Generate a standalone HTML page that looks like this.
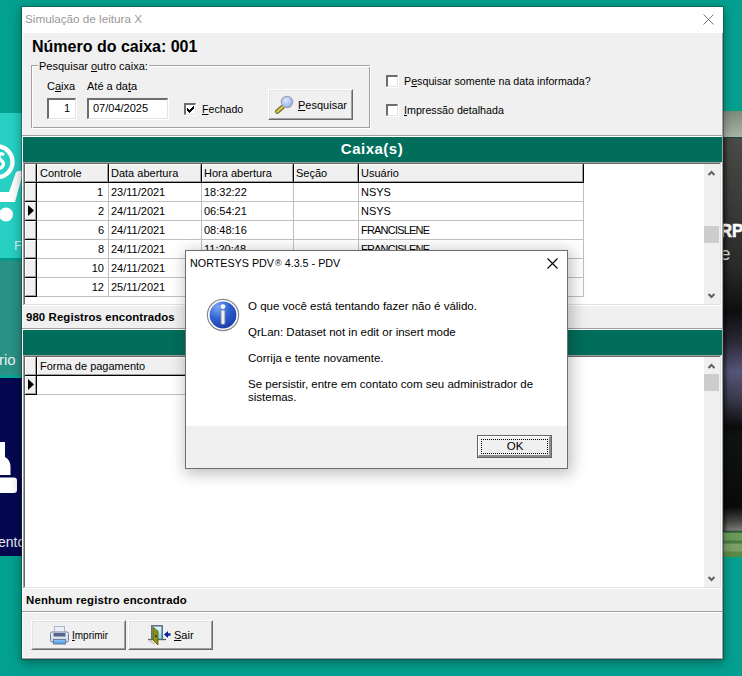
<!DOCTYPE html>
<html><head><meta charset="utf-8">
<style>
*{margin:0;padding:0;box-sizing:border-box}
html,body{width:742px;height:676px;overflow:hidden}
body{position:relative;background:#04a08f;font-family:"Liberation Sans",sans-serif;font-size:11px;color:#000}
.a{position:absolute}
.t{position:absolute;white-space:nowrap;line-height:1}
.u{text-decoration:underline;text-underline-offset:1px;text-decoration-thickness:1px}
svg{position:absolute;overflow:visible}
</style></head><body>

<div class="a" style="left:0px;top:113px;width:22px;height:145px;background:#27d0c3"></div>
<div class="a" style="left:0px;top:258px;width:22px;height:117px;background:#2a9186"></div>
<div class="a" style="left:0px;top:258px;width:22px;height:3px;background:#069a8b"></div>
<div class="a" style="left:0px;top:375px;width:22px;height:3px;background:#0aa594"></div>
<div class="a" style="left:0px;top:378px;width:22px;height:178px;background:#05084f"></div>
<svg style="left:0;top:113px" width="21" height="145">
<circle cx="-3" cy="48.8" r="15.5" fill="none" stroke="#fff" stroke-width="4.4"/>
<path d="M4 42Q0 39 -1 43Q-1 46 2 48Q5 51 2 54Q0 56 -2 54" stroke="#fff" stroke-width="3.2" fill="none"/>
<path d="M16 59L9 79H-2V89H15L23 60Q22 56 16 59Z" fill="#fff"/>
<circle cx="6" cy="101.5" r="7" fill="#fff"/>
</svg>
<div class="t" style="left:14px;top:239px;font-size:13px;color:#d8f4f0">F</div>
<div class="t" style="left:-1px;top:352px;font-size:15px;color:#e6f2ef">rio</div>
<svg style="left:0;top:440px" width="21" height="60">
<path d="M-2 2H5V17Q10.5 20 10.5 27V35H-2Z" fill="#fff"/>
<rect x="-4" y="37.5" width="21" height="15.5" rx="3" fill="#fff"/>
</svg>
<div class="t" style="left:-2px;top:535px;font-size:14px;color:#e8eaf4">ento</div>
<div class="a" style="left:723px;top:111px;width:19px;height:26px;background:linear-gradient(180deg,#7c8a7c,#a8b4a8)"></div>
<div class="a" style="left:723px;top:137px;width:19px;height:395px;background:linear-gradient(90deg,rgba(0,0,0,.45),rgba(0,0,0,0) 5px),linear-gradient(180deg,#1a4a3a 0px,#4a4a46 2px,#3c3c3a 60px,#2a2a2a 130px,#0e0e10 175px,#2a2a36 205px,#56567a 235px,#3a3a4c 262px,#0c0c0c 290px,#101410 300px,#0a0a0a 370px,#4a4a48 385px,#7a7a72 393px,#1a4a30 395px)"></div>
<div class="t" style="left:720px;top:222px;font-size:18.5px;font-weight:bold;color:#fff;-webkit-text-stroke:0.6px #fff;transform:scaleX(0.9);transform-origin:left top">RP</div>
<div class="t" style="left:720px;top:244px;font-size:19px;color:#ddd">e</div>
<div class="a" style="left:723px;top:532px;width:19px;height:25px;background:linear-gradient(180deg,#1a4a2a 0px,#6a9a5a 1px,#6a9a5a 8px,#4a7a40 9px,#4a7a40 11px,#7aa068 12px,#7aa068 19px,#5a8a48 20px,#5a8a48 25px)"></div>
<div class="a" style="left:21px;top:6px;width:703px;height:654px;border:1px solid rgba(20,50,50,.45);background:#f0f0f0;background-clip:padding-box;box-shadow:0 3px 10px rgba(0,0,0,.35)"></div>
<div class="a" style="left:22px;top:7px;width:701px;height:26px;background:#fff"></div>
<div class="a" style="left:22px;top:33px;width:1px;height:625px;background:#fff"></div>
<div class="a" style="left:721px;top:33px;width:1px;height:625px;background:#f7f7f7"></div>
<div class="a" style="left:22px;top:657px;width:700px;height:1px;background:#f7f7f7"></div>
<div class="a" style="left:722px;top:33px;width:1px;height:626px;background:#a49c9c"></div>
<div class="a" style="left:22px;top:658px;width:701px;height:1px;background:#a49c9c"></div>
<div class="t" style="left:25px;top:13.10px;font-size:11.7px;color:#999">Simulação de leitura X</div>
<svg style="left:703px;top:14px" width="11" height="11"><path d="M0.5 0.5L10.5 10.5M10.5 0.5L0.5 10.5" stroke="#777" stroke-width="1" fill="none"/></svg>
<div class="t" style="left:32px;top:39.46px;font-size:16px;font-weight:bold">Número do caixa: 001</div>
<div class="a" style="left:31px;top:65px;width:339px;height:63px;border:1px solid #a0a0a0;"></div>
<div class="a" style="left:32px;top:66px;width:339px;height:63px;border:1px solid #fff;border-right:0;border-bottom:0"></div>
<div class="a" style="left:370px;top:65px;width:1px;height:64px;background:#fff"></div>
<div class="a" style="left:31px;top:128px;width:340px;height:1px;background:#fff"></div>
<div class="t" style="left:38px;top:61px;font-size:11px;background:#f0f0f0;padding:0 1px">Pesquisar <span class="u">o</span>utro caixa:</div>
<div class="t" style="left:47px;top:80.69px;font-size:11px;">C<span class="u">a</span>ixa</div>
<div class="t" style="left:87px;top:80.69px;font-size:11px;">Até a da<span class="u">t</span>a</div>
<div class="a" style="left:47px;top:98px;width:29px;height:21px;background:#fff;border-top:2px solid #6d6d6d;border-left:2px solid #6d6d6d;border-right:1px solid #e3e3e3;border-bottom:1px solid #e3e3e3"></div>
<div class="a" style="left:76px;top:98px;width:1px;height:22px;background:#fff"></div>
<div class="a" style="left:47px;top:119px;width:30px;height:1px;background:#fff"></div>
<div class="a" style="left:87px;top:98px;width:81px;height:21px;background:#fff;border-top:2px solid #6d6d6d;border-left:2px solid #6d6d6d;border-right:1px solid #e3e3e3;border-bottom:1px solid #e3e3e3"></div>
<div class="a" style="left:168px;top:98px;width:1px;height:22px;background:#fff"></div>
<div class="a" style="left:87px;top:119px;width:82px;height:1px;background:#fff"></div>
<div class="t" style="right:672px;top:102.69px;font-size:11px;">1</div>
<div class="t" style="left:93px;top:102.69px;font-size:11px;">07/04/2025</div>
<div class="a" style="left:184px;top:103px;width:12px;height:12px;background:#fff;border-top:2px solid #6d6d6d;border-left:2px solid #6d6d6d;border-right:1px solid #e3e3e3;border-bottom:1px solid #e3e3e3"></div>
<div class="a" style="left:196px;top:103px;width:1px;height:13px;background:#fff"></div>
<div class="a" style="left:184px;top:115px;width:13px;height:1px;background:#fff"></div>
<svg style="left:184px;top:103px" width="13" height="13" shape-rendering="crispEdges"><rect x="3" y="5" width="1" height="3"/><rect x="4" y="6" width="1" height="3"/><rect x="5" y="7" width="1" height="3"/><rect x="6" y="6" width="1" height="3"/><rect x="7" y="5" width="1" height="3"/><rect x="8" y="4" width="1" height="3"/><rect x="9" y="3" width="1" height="3"/></svg>
<div class="t" style="left:202px;top:104.03px;font-size:10.6px;"><span class="u">F</span>echado</div>
<div class="a" style="left:386px;top:75px;width:12px;height:12px;background:#fff;border-top:2px solid #6d6d6d;border-left:2px solid #6d6d6d;border-right:1px solid #e3e3e3;border-bottom:1px solid #e3e3e3"></div>
<div class="a" style="left:398px;top:75px;width:1px;height:13px;background:#fff"></div>
<div class="a" style="left:386px;top:87px;width:13px;height:1px;background:#fff"></div>
<div class="t" style="left:404px;top:75.94px;font-size:10.7px;">P<span class="u">e</span>squisar somente na data informada?</div>
<div class="a" style="left:386px;top:104px;width:12px;height:12px;background:#fff;border-top:2px solid #6d6d6d;border-left:2px solid #6d6d6d;border-right:1px solid #e3e3e3;border-bottom:1px solid #e3e3e3"></div>
<div class="a" style="left:398px;top:104px;width:1px;height:13px;background:#fff"></div>
<div class="a" style="left:386px;top:116px;width:13px;height:1px;background:#fff"></div>
<div class="t" style="left:404px;top:104.94px;font-size:10.7px;"><span class="u">I</span>mpressão detalhada</div>
<div class="a" style="left:268px;top:89px;width:85px;height:31px;background:#f0f0f0;border-top:1px solid #fff;border-left:1px solid #fff;border-right:1px solid #696969;border-bottom:1px solid #696969"></div>
<div class="a" style="left:269px;top:90px;width:83px;height:29px;border-top:1px solid #e3e3e3;border-left:1px solid #e3e3e3;border-right:1px solid #a0a0a0;border-bottom:1px solid #a0a0a0"></div>
<div class="t" style="left:298px;top:99.69px;font-size:11px;"><span class="u">P</span>esquisar</div>
<svg style="left:270px;top:90px" width="30" height="28">
<defs><radialGradient id="lens" cx="0.4" cy="0.35" r="0.7"><stop offset="0" stop-color="#dde8ff"/><stop offset="0.7" stop-color="#a8c0f0"/><stop offset="1" stop-color="#88a4e0"/></radialGradient></defs>
<line x1="12.3" y1="17.2" x2="7.3" y2="21.6" stroke="#6e6a20" stroke-width="4.6" stroke-linecap="round"/>
<line x1="12.3" y1="17.2" x2="7.3" y2="21.6" stroke="#cfc850" stroke-width="2.4" stroke-linecap="round"/>
<circle cx="17" cy="12" r="5.7" fill="url(#lens)" stroke="#a0a6b6" stroke-width="1.2"/>
</svg>
<div class="a" style="left:22px;top:135px;width:700px;height:1px;background:#a0a0a0"></div>
<div class="a" style="left:22px;top:136px;width:700px;height:1px;background:#fff"></div>
<div class="a" style="left:23px;top:137px;width:699px;height:25px;background:#006e5a"></div>
<div class="t" style="left:172px;width:400px;text-align:center;top:141.30px;font-size:15px;color:#fff;font-weight:bold;letter-spacing:0.5px">Caixa(s)</div>
<div class="a" style="left:23px;top:162px;width:699px;height:144px;background:#fff"></div>
<div class="a" style="left:23px;top:162px;width:699px;height:1px;background:#a0a0a0"></div>
<div class="a" style="left:23px;top:162px;width:1px;height:144px;background:#a0a0a0"></div>
<div class="a" style="left:24px;top:163px;width:697px;height:1px;background:#696969"></div>
<div class="a" style="left:24px;top:163px;width:1px;height:142px;background:#696969"></div>
<div class="a" style="left:23px;top:305px;width:699px;height:1px;background:#fff"></div>
<div class="a" style="left:24px;top:304px;width:697px;height:1px;background:#e3e3e3"></div>
<div class="a" style="left:721px;top:162px;width:1px;height:144px;background:#fff"></div>
<div class="a" style="left:720px;top:163px;width:1px;height:142px;background:#e3e3e3"></div>
<div class="a" style="left:704px;top:164px;width:16px;height:140px;background:#f0f0f0"></div>
<svg style="left:704px;top:164px" width="16" height="17"><path d="M4.5 11L7.5 8L10.5 11" stroke="#606060" stroke-width="2" fill="none"/></svg>
<svg style="left:704px;top:287px" width="16" height="17"><path d="M4.5 7L7.5 10L10.5 7" stroke="#606060" stroke-width="2" fill="none"/></svg>
<div class="a" style="left:704px;top:226px;width:15px;height:17px;background:#cdcdcd"></div>
<div class="a" style="left:25px;top:164px;width:11px;height:18px;background:#f0f0f0;border-top:1px solid #fff;border-left:1px solid #fff;border-right:1px solid #a0a0a0;border-bottom:1px solid #a0a0a0"></div>
<div class="a" style="left:36px;top:164px;width:1px;height:19px;background:#000"></div>
<div class="a" style="left:37px;top:164px;width:71px;height:18px;background:#f0f0f0;border-top:1px solid #fff;border-left:1px solid #fff;border-right:1px solid #a0a0a0;border-bottom:1px solid #a0a0a0"></div>
<div class="a" style="left:108px;top:164px;width:1px;height:19px;background:#000"></div>
<div class="a" style="left:109px;top:164px;width:92px;height:18px;background:#f0f0f0;border-top:1px solid #fff;border-left:1px solid #fff;border-right:1px solid #a0a0a0;border-bottom:1px solid #a0a0a0"></div>
<div class="a" style="left:201px;top:164px;width:1px;height:19px;background:#000"></div>
<div class="a" style="left:202px;top:164px;width:91px;height:18px;background:#f0f0f0;border-top:1px solid #fff;border-left:1px solid #fff;border-right:1px solid #a0a0a0;border-bottom:1px solid #a0a0a0"></div>
<div class="a" style="left:293px;top:164px;width:1px;height:19px;background:#000"></div>
<div class="a" style="left:294px;top:164px;width:64px;height:18px;background:#f0f0f0;border-top:1px solid #fff;border-left:1px solid #fff;border-right:1px solid #a0a0a0;border-bottom:1px solid #a0a0a0"></div>
<div class="a" style="left:358px;top:164px;width:1px;height:19px;background:#000"></div>
<div class="a" style="left:359px;top:164px;width:224px;height:18px;background:#f0f0f0;border-top:1px solid #fff;border-left:1px solid #fff;border-right:1px solid #a0a0a0;border-bottom:1px solid #a0a0a0"></div>
<div class="a" style="left:583px;top:164px;width:1px;height:19px;background:#000"></div>
<div class="a" style="left:25px;top:182px;width:559px;height:1px;background:#000"></div>
<div class="t" style="left:40px;top:167.69px;font-size:11px;">Controle</div>
<div class="t" style="left:111px;top:167.69px;font-size:11px;">Data abertura</div>
<div class="t" style="left:204px;top:167.69px;font-size:11px;">Hora abertura</div>
<div class="t" style="left:296px;top:167.69px;font-size:11px;">Seção</div>
<div class="t" style="left:361px;top:167.69px;font-size:11px;">Usuário</div>
<div class="a" style="left:25px;top:183px;width:11px;height:18px;background:#f0f0f0;border-top:1px solid #fff;border-left:1px solid #fff;border-right:1px solid #a0a0a0;border-bottom:1px solid #a0a0a0"></div>
<div class="a" style="left:36px;top:183px;width:1px;height:19px;background:#000"></div>
<div class="a" style="left:25px;top:201px;width:12px;height:1px;background:#000"></div>
<div class="a" style="left:37px;top:201px;width:547px;height:1px;background:#c0c0c0"></div>
<div class="a" style="left:108px;top:183px;width:1px;height:19px;background:#c0c0c0"></div>
<div class="a" style="left:201px;top:183px;width:1px;height:19px;background:#c0c0c0"></div>
<div class="a" style="left:293px;top:183px;width:1px;height:19px;background:#c0c0c0"></div>
<div class="a" style="left:358px;top:183px;width:1px;height:19px;background:#c0c0c0"></div>
<div class="a" style="left:583px;top:183px;width:1px;height:19px;background:#c0c0c0"></div>
<div class="t" style="right:639px;top:186.69px;font-size:11px;">1</div>
<div class="t" style="left:111px;top:186.69px;font-size:11px;">23/11/2021</div>
<div class="t" style="left:204px;top:186.69px;font-size:11px;">18:32:22</div>
<div class="t" style="left:361px;top:186.69px;font-size:11px;">NSYS</div>
<div class="a" style="left:25px;top:202px;width:11px;height:18px;background:#f0f0f0;border-top:1px solid #fff;border-left:1px solid #fff;border-right:1px solid #a0a0a0;border-bottom:1px solid #a0a0a0"></div>
<div class="a" style="left:36px;top:202px;width:1px;height:19px;background:#000"></div>
<div class="a" style="left:25px;top:220px;width:12px;height:1px;background:#000"></div>
<div class="a" style="left:37px;top:220px;width:547px;height:1px;background:#c0c0c0"></div>
<div class="a" style="left:108px;top:202px;width:1px;height:19px;background:#c0c0c0"></div>
<div class="a" style="left:201px;top:202px;width:1px;height:19px;background:#c0c0c0"></div>
<div class="a" style="left:293px;top:202px;width:1px;height:19px;background:#c0c0c0"></div>
<div class="a" style="left:358px;top:202px;width:1px;height:19px;background:#c0c0c0"></div>
<div class="a" style="left:583px;top:202px;width:1px;height:19px;background:#c0c0c0"></div>
<svg style="left:25px;top:202px" width="11" height="18"><path d="M3 3L3 14L9 8.5Z" fill="#000"/></svg>
<div class="t" style="right:638px;top:205.69px;font-size:11px;">2</div>
<div class="t" style="left:111px;top:205.69px;font-size:11px;">24/11/2021</div>
<div class="t" style="left:204px;top:205.69px;font-size:11px;">06:54:21</div>
<div class="t" style="left:361px;top:205.69px;font-size:11px;">NSYS</div>
<div class="a" style="left:25px;top:221px;width:11px;height:18px;background:#f0f0f0;border-top:1px solid #fff;border-left:1px solid #fff;border-right:1px solid #a0a0a0;border-bottom:1px solid #a0a0a0"></div>
<div class="a" style="left:36px;top:221px;width:1px;height:19px;background:#000"></div>
<div class="a" style="left:25px;top:239px;width:12px;height:1px;background:#000"></div>
<div class="a" style="left:37px;top:239px;width:547px;height:1px;background:#c0c0c0"></div>
<div class="a" style="left:108px;top:221px;width:1px;height:19px;background:#c0c0c0"></div>
<div class="a" style="left:201px;top:221px;width:1px;height:19px;background:#c0c0c0"></div>
<div class="a" style="left:293px;top:221px;width:1px;height:19px;background:#c0c0c0"></div>
<div class="a" style="left:358px;top:221px;width:1px;height:19px;background:#c0c0c0"></div>
<div class="a" style="left:583px;top:221px;width:1px;height:19px;background:#c0c0c0"></div>
<div class="t" style="right:638px;top:224.69px;font-size:11px;">6</div>
<div class="t" style="left:111px;top:224.69px;font-size:11px;">24/11/2021</div>
<div class="t" style="left:204px;top:224.69px;font-size:11px;">08:48:16</div>
<div class="t" style="left:361px;top:224.69px;font-size:11px;letter-spacing:-0.8px">FRANCISLENE</div>
<div class="a" style="left:25px;top:240px;width:11px;height:18px;background:#f0f0f0;border-top:1px solid #fff;border-left:1px solid #fff;border-right:1px solid #a0a0a0;border-bottom:1px solid #a0a0a0"></div>
<div class="a" style="left:36px;top:240px;width:1px;height:19px;background:#000"></div>
<div class="a" style="left:25px;top:258px;width:12px;height:1px;background:#000"></div>
<div class="a" style="left:37px;top:258px;width:547px;height:1px;background:#c0c0c0"></div>
<div class="a" style="left:108px;top:240px;width:1px;height:19px;background:#c0c0c0"></div>
<div class="a" style="left:201px;top:240px;width:1px;height:19px;background:#c0c0c0"></div>
<div class="a" style="left:293px;top:240px;width:1px;height:19px;background:#c0c0c0"></div>
<div class="a" style="left:358px;top:240px;width:1px;height:19px;background:#c0c0c0"></div>
<div class="a" style="left:583px;top:240px;width:1px;height:19px;background:#c0c0c0"></div>
<div class="t" style="right:638px;top:243.69px;font-size:11px;">8</div>
<div class="t" style="left:111px;top:243.69px;font-size:11px;">24/11/2021</div>
<div class="t" style="left:204px;top:243.69px;font-size:11px;">11:20:48</div>
<div class="t" style="left:361px;top:243.69px;font-size:11px;letter-spacing:-0.8px">FRANCISLENE</div>
<div class="a" style="left:25px;top:259px;width:11px;height:18px;background:#f0f0f0;border-top:1px solid #fff;border-left:1px solid #fff;border-right:1px solid #a0a0a0;border-bottom:1px solid #a0a0a0"></div>
<div class="a" style="left:36px;top:259px;width:1px;height:19px;background:#000"></div>
<div class="a" style="left:25px;top:277px;width:12px;height:1px;background:#000"></div>
<div class="a" style="left:37px;top:277px;width:547px;height:1px;background:#c0c0c0"></div>
<div class="a" style="left:108px;top:259px;width:1px;height:19px;background:#c0c0c0"></div>
<div class="a" style="left:201px;top:259px;width:1px;height:19px;background:#c0c0c0"></div>
<div class="a" style="left:293px;top:259px;width:1px;height:19px;background:#c0c0c0"></div>
<div class="a" style="left:358px;top:259px;width:1px;height:19px;background:#c0c0c0"></div>
<div class="a" style="left:583px;top:259px;width:1px;height:19px;background:#c0c0c0"></div>
<div class="t" style="right:638px;top:262.69px;font-size:11px;">10</div>
<div class="t" style="left:111px;top:262.69px;font-size:11px;">24/11/2021</div>
<div class="a" style="left:25px;top:278px;width:11px;height:18px;background:#f0f0f0;border-top:1px solid #fff;border-left:1px solid #fff;border-right:1px solid #a0a0a0;border-bottom:1px solid #a0a0a0"></div>
<div class="a" style="left:36px;top:278px;width:1px;height:19px;background:#000"></div>
<div class="a" style="left:25px;top:296px;width:12px;height:1px;background:#000"></div>
<div class="a" style="left:37px;top:296px;width:547px;height:1px;background:#c0c0c0"></div>
<div class="a" style="left:108px;top:278px;width:1px;height:19px;background:#c0c0c0"></div>
<div class="a" style="left:201px;top:278px;width:1px;height:19px;background:#c0c0c0"></div>
<div class="a" style="left:293px;top:278px;width:1px;height:19px;background:#c0c0c0"></div>
<div class="a" style="left:358px;top:278px;width:1px;height:19px;background:#c0c0c0"></div>
<div class="a" style="left:583px;top:278px;width:1px;height:19px;background:#c0c0c0"></div>
<div class="t" style="right:638px;top:281.69px;font-size:11px;">12</div>
<div class="t" style="left:111px;top:281.69px;font-size:11px;">25/11/2021</div>
<div class="t" style="left:26px;top:312.35px;font-size:11.4px;font-weight:bold;letter-spacing:0.1px">980 Registros encontrados</div>
<div class="a" style="left:22px;top:328px;width:700px;height:1px;background:#a0a0a0"></div>
<div class="a" style="left:22px;top:329px;width:700px;height:1px;background:#fff"></div>
<div class="a" style="left:23px;top:330px;width:699px;height:25px;background:#006e5a"></div>
<div class="a" style="left:23px;top:355px;width:699px;height:234px;background:#fff"></div>
<div class="a" style="left:23px;top:355px;width:699px;height:1px;background:#a0a0a0"></div>
<div class="a" style="left:23px;top:355px;width:1px;height:234px;background:#a0a0a0"></div>
<div class="a" style="left:24px;top:356px;width:697px;height:1px;background:#696969"></div>
<div class="a" style="left:24px;top:356px;width:1px;height:232px;background:#696969"></div>
<div class="a" style="left:23px;top:588px;width:699px;height:1px;background:#fff"></div>
<div class="a" style="left:24px;top:587px;width:697px;height:1px;background:#e3e3e3"></div>
<div class="a" style="left:721px;top:355px;width:1px;height:234px;background:#fff"></div>
<div class="a" style="left:720px;top:356px;width:1px;height:232px;background:#e3e3e3"></div>
<div class="a" style="left:704px;top:357px;width:16px;height:230px;background:#f0f0f0"></div>
<svg style="left:704px;top:357px" width="16" height="17"><path d="M4.5 11L7.5 8L10.5 11" stroke="#606060" stroke-width="2" fill="none"/></svg>
<svg style="left:704px;top:570px" width="16" height="17"><path d="M4.5 7L7.5 10L10.5 7" stroke="#606060" stroke-width="2" fill="none"/></svg>
<div class="a" style="left:704px;top:374px;width:15px;height:17px;background:#cdcdcd"></div>
<div class="a" style="left:25px;top:357px;width:11px;height:18px;background:#f0f0f0;border-top:1px solid #fff;border-left:1px solid #fff;border-right:1px solid #a0a0a0;border-bottom:1px solid #a0a0a0"></div>
<div class="a" style="left:36px;top:357px;width:1px;height:19px;background:#000"></div>
<div class="a" style="left:441px;top:357px;width:1px;height:19px;background:#000"></div>
<div class="a" style="left:37px;top:357px;width:404px;height:18px;background:#f0f0f0;border-top:1px solid #fff;border-left:1px solid #fff;border-right:1px solid #a0a0a0;border-bottom:1px solid #a0a0a0"></div>
<div class="a" style="left:25px;top:375px;width:417px;height:1px;background:#000"></div>
<div class="t" style="left:40px;top:360.69px;font-size:11px;">Forma de pagamento</div>
<div class="a" style="left:25px;top:376px;width:11px;height:18px;background:#f0f0f0;border-top:1px solid #fff;border-left:1px solid #fff;border-right:1px solid #a0a0a0;border-bottom:1px solid #a0a0a0"></div>
<div class="a" style="left:36px;top:376px;width:1px;height:19px;background:#000"></div>
<div class="a" style="left:25px;top:394px;width:12px;height:1px;background:#000"></div>
<div class="a" style="left:37px;top:394px;width:405px;height:1px;background:#c0c0c0"></div>
<div class="a" style="left:441px;top:376px;width:1px;height:19px;background:#c0c0c0"></div>
<svg style="left:25px;top:376px" width="11" height="18"><path d="M3 3L3 14L9 8.5Z" fill="#000"/></svg>
<div class="t" style="left:26px;top:595.35px;font-size:11.4px;font-weight:bold;letter-spacing:0.18px">Nenhum registro encontrado</div>
<div class="a" style="left:22px;top:611px;width:700px;height:1px;background:#a0a0a0"></div>
<div class="a" style="left:22px;top:612px;width:700px;height:1px;background:#fff"></div>
<div class="a" style="left:31px;top:620px;width:95px;height:30px;background:#f0f0f0;border-top:1px solid #fff;border-left:1px solid #fff;border-right:1px solid #696969;border-bottom:1px solid #696969"></div>
<div class="a" style="left:32px;top:621px;width:93px;height:28px;border-top:1px solid #e3e3e3;border-left:1px solid #e3e3e3;border-right:1px solid #a0a0a0;border-bottom:1px solid #a0a0a0"></div>
<div class="a" style="left:128px;top:620px;width:85px;height:30px;background:#f0f0f0;border-top:1px solid #fff;border-left:1px solid #fff;border-right:1px solid #696969;border-bottom:1px solid #696969"></div>
<div class="a" style="left:129px;top:621px;width:83px;height:28px;border-top:1px solid #e3e3e3;border-left:1px solid #e3e3e3;border-right:1px solid #a0a0a0;border-bottom:1px solid #a0a0a0"></div>
<div class="t" style="left:72px;top:630.53px;font-size:10px;"><span class="u">I</span>mprimir</div>
<div class="t" style="left:174px;top:629.69px;font-size:11px;"><span class="u">S</span>air</div>
<svg style="left:50px;top:625px" width="19" height="20">
<defs>
<linearGradient id="pb" x1="0" y1="0" x2="0" y2="1"><stop offset="0" stop-color="#f4f6fb"/><stop offset="1" stop-color="#c8d0e0"/></linearGradient>
<linearGradient id="pt" x1="0" y1="0" x2="0" y2="1"><stop offset="0" stop-color="#8cc8f4"/><stop offset="1" stop-color="#4a98e0"/></linearGradient>
</defs>
<rect x="4.5" y="1.5" width="10" height="8" fill="#eceff6" stroke="#aab4cc"/>
<rect x="0.5" y="7" width="18" height="10" rx="1.5" fill="url(#pb)" stroke="#7080a8"/>
<rect x="3.5" y="8" width="12" height="3.5" fill="#56658c"/>
<rect x="3.5" y="14.5" width="12" height="4.5" fill="url(#pt)" stroke="#6a7aa0"/>
</svg>
<svg style="left:147px;top:624px" width="26" height="24">
<defs><linearGradient id="dg" x1="0" y1="0" x2="0" y2="1"><stop offset="0" stop-color="#e6faff"/><stop offset="1" stop-color="#7fd4f6"/></linearGradient></defs>
<path d="M1 15.5H5" stroke="#6a6a50" stroke-width="1.3"/><path d="M15 15.5H19" stroke="#4a5a60" stroke-width="1.3"/>
<path d="M2 16.5L8 20" stroke="#b8b8b8" stroke-width="1.2"/>
<rect x="4.8" y="1.8" width="10.4" height="13.7" fill="url(#dg)" stroke="#4f6574" stroke-width="1.4"/>
<path d="M6 3L11 7.2V21L6 16Z" fill="#8f8f12" stroke="#5a5a00" stroke-width="0.8"/>
<path d="M8.2 11.5L9.6 12.6" stroke="#000" stroke-width="1.1"/>
<path d="M17 10.5L21 7V9.3H23.5V11.7H21V14Z" fill="#0c2096"/>
</svg>
<div class="a" style="left:185px;top:250px;width:383px;height:219px;background:#fff;border:1px solid #6e6e6e;box-shadow:2px 3px 14px 2px rgba(0,0,0,.25)"></div>
<div class="a" style="left:186px;top:426px;width:381px;height:42px;background:#f0f0f0"></div>
<div class="t" style="left:190px;top:257.90px;font-size:10.75px;">NORTESYS PDV<span style="font-size:9px;position:relative;top:-1px;margin-left:1px">®</span> 4.3.5 - PDV</div>
<svg style="left:547px;top:258px" width="11" height="11"><path d="M0.5 0.5L10.5 10.5M10.5 0.5L0.5 10.5" stroke="#000" stroke-width="1.1" fill="none"/></svg>
<svg style="left:205px;top:297px" width="36" height="36">
<defs>
<radialGradient id="ib" cx="0.3" cy="0.2" r="0.9"><stop offset="0" stop-color="#7aa6f4"/><stop offset="0.5" stop-color="#3060d0"/><stop offset="1" stop-color="#1838a8"/></radialGradient>
<linearGradient id="is" x1="0" y1="0" x2="1" y2="0"><stop offset="0" stop-color="#c8c8c8"/><stop offset="0.5" stop-color="#ffffff"/><stop offset="1" stop-color="#b0b0b0"/></linearGradient>
</defs>
<circle cx="18" cy="18" r="15.6" fill="#fff" stroke="#8a8a8a" stroke-width="1.2"/>
<circle cx="18" cy="18" r="13.4" fill="url(#ib)"/>
<circle cx="18" cy="9.6" r="2.4" fill="#fff"/>
<rect x="16" y="13.2" width="4" height="14" rx="1.2" fill="url(#is)" stroke="#9a9a9a" stroke-width="0.5"/>
</svg>
<div class="t" style="left:248px;top:301.27px;font-size:11.5px;">O que você está tentando fazer não é válido.</div>
<div class="t" style="left:248px;top:327.27px;font-size:11.5px;">QrLan: Dataset not in edit or insert mode</div>
<div class="t" style="left:248px;top:353.27px;font-size:11.5px;">Corrija e tente novamente.</div>
<div class="t" style="left:248px;top:379.27px;font-size:11.5px;">Se persistir, entre em contato com seu administrador de</div>
<div class="t" style="left:248px;top:392.27px;font-size:11.5px;">sistemas.</div>
<div class="a" style="left:477px;top:435px;width:75px;height:23px;background:#f0f0f0;border:1px solid #646464"></div>
<div class="a" style="left:478px;top:436px;width:73px;height:21px;border-top:1px solid #fff;border-left:1px solid #fff;border-right:2px solid #8c8c8c;border-bottom:2px solid #8c8c8c"></div>
<div class="a" style="left:481px;top:439px;width:67px;height:15px;border:1px dotted #000"></div>
<div class="t" style="left:315px;width:400px;text-align:center;top:441.27px;font-size:11.5px;">OK</div>
</body></html>
